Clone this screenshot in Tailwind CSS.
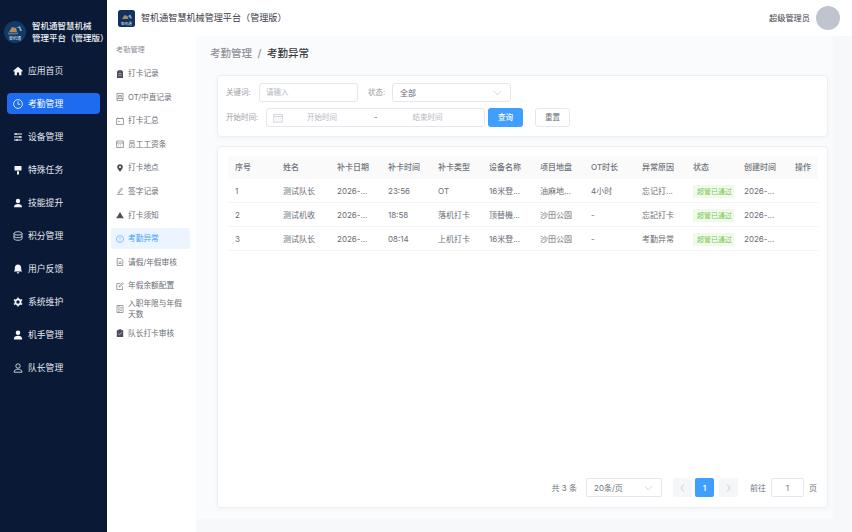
<!doctype html>
<html lang="zh">
<head>
<meta charset="utf-8">
<script src="https://cdn.jsdelivr.net/npm/@tailwindcss/browser@4"></script>
</head>
<body class="m-0">
<div class="flex h-[532px] w-[852px] overflow-hidden bg-[#f6f8f9] font-['Inter','Noto_Sans_CJK_SC',sans-serif] text-[#6a6d75]">
  <!-- primary sidebar -->
  <aside class="flex h-full w-[107px] shrink-0 flex-col bg-[#0a1935] text-[#e4e8ef]">
    <div class="flex h-[55px] items-center gap-[6px] pl-[4px] pt-[8px]">
      <svg class="h-[22px] w-[22px] shrink-0" viewBox="0 0 22 22"><circle cx="11" cy="11" r="11" fill="#123a66"/><path d="M5 11l3-5 4 1 1 4z" fill="#b98a55"/><path d="M12 7l4-2 2 5h-2l-1-3z" fill="#7fa6cc"/><rect x="4" y="11.500" width="10" height="2" fill="#5a6f8c"/><text x="11" y="18.500" text-anchor="middle" font-size="4" fill="#dfe6ef" font-family="Noto Sans CJK SC">智机通</text></svg>
      <div class="text-[8.500px] font-medium leading-[12px] text-[#eef1f5] whitespace-nowrap">智机通智慧机械<br>管理平台（管理版）</div>
    </div>
    <nav class="mt-[5px] flex flex-col gap-[12px] px-[7px] text-[8.800px] leading-[21px]">
      <a class="flex h-[21px] items-center gap-[5px] pl-[6px]"><svg class="h-[10px] w-[10px]" viewBox="0 0 10 10" fill="#f4f6f9"><path d="M5 .8L.5 4.600v.8h1.100V9.300h2.300V6.500h2.200v2.800h2.300V5.400h1.100v-.8z"/></svg>应用首页</a>
      <a class="flex h-[21px] items-center gap-[5px] rounded-[4px] bg-[#1d6cf0] pl-[6px] text-white"><svg class="h-[10px] w-[10px]" viewBox="0 0 10 10" fill="none" stroke="#fff" stroke-width=".8"><circle cx="5" cy="5" r="4.400"/><path d="M5 2.400V5.300h2.200"/></svg>考勤管理</a>
      <a class="flex h-[21px] items-center gap-[5px] pl-[6px]"><svg class="h-[10px] w-[10px]" viewBox="0 0 10 10" fill="none" stroke="#eef1f5" stroke-width="1"><path d="M1 2h8M1 5h8M1 8h8"/><path d="M3 1v2M7 4v2M4 7v2" stroke-width="1.200"/></svg>设备管理</a>
      <a class="flex h-[21px] items-center gap-[5px] pl-[6px]"><svg class="h-[10px] w-[10px]" viewBox="0 0 10 10" fill="#f4f6f9"><path d="M1.500 1h7v4.600h-7zM4 6.200h2V9.400H4z"/></svg>特殊任务</a>
      <a class="flex h-[21px] items-center gap-[5px] pl-[6px]"><svg class="h-[10px] w-[10px]" viewBox="0 0 10 10" fill="#f4f6f9"><circle cx="5" cy="3" r="2.200"/><path d="M1 9.200c0-2.400 1.600-3.300 4-3.300s4 .9 4 3.300z"/></svg>技能提升</a>
      <a class="flex h-[21px] items-center gap-[5px] pl-[6px]"><svg class="h-[10px] w-[10px]" viewBox="0 0 10 10" fill="none" stroke="#eef1f5" stroke-width=".8"><ellipse cx="5" cy="2.400" rx="4" ry="1.700"/><path d="M1 2.400v5.200c0 1 1.800 1.700 4 1.700s4-.7 4-1.700V2.400M1 5c0 1 1.800 1.700 4 1.700S9 6 9 5"/></svg>积分管理</a>
      <a class="flex h-[21px] items-center gap-[5px] pl-[6px]"><svg class="h-[10px] w-[10px]" viewBox="0 0 10 10" fill="#f4f6f9"><path d="M5 .6c-2 0-3.200 1.500-3.200 3.400v2L.9 7.600h8.200L8.200 6V4C8.200 2.100 7 .6 5 .6zM3.800 8.200a1.200 1.200 0 0 0 2.400 0z"/></svg>用户反馈</a>
      <a class="flex h-[21px] items-center gap-[5px] pl-[6px]"><svg class="h-[10px] w-[10px]" viewBox="0 0 10 10" fill="none" stroke="#f4f6f9"><circle cx="5" cy="5" r="2.600" stroke-width="1.800"/><path d="M5 .5v1.500M5 8v1.500M.9 2.600l1.300.8M7.800 6.600l1.300.8M.9 7.400l1.300-.8M7.800 3.400l1.300-.8" stroke-width="1.400"/></svg>系统维护</a>
      <a class="flex h-[21px] items-center gap-[5px] pl-[6px]"><svg class="h-[10px] w-[10px]" viewBox="0 0 10 10" fill="#f4f6f9"><circle cx="5" cy="2.800" r="2.300"/><path d="M.8 9.400c0-2.600 1.800-3.600 4.200-3.600s4.200 1 4.200 3.600z"/></svg>机手管理</a>
      <a class="flex h-[21px] items-center gap-[5px] pl-[6px]"><svg class="h-[10px] w-[10px]" viewBox="0 0 10 10" fill="none" stroke="#eef1f5" stroke-width=".8"><circle cx="5" cy="3" r="2.200"/><path d="M1 9.200c0-2 1.800-3 4-3s4 1 4 3z"/></svg>队长管理</a>
    </nav>
  </aside>

  <div class="flex min-w-0 flex-1 flex-col">
    <!-- header -->
    <header class="flex h-[36px] shrink-0 items-center justify-between bg-white px-[11px]">
      <div class="flex items-center gap-[6px]">
        <svg class="h-[17px] w-[17px]" viewBox="0 0 17 17"><rect width="17" height="17" rx="2.500" fill="#12315c"/><path d="M4 9l2.500-4 3 1 1 3z" fill="#a98a66"/><path d="M10 6l2.500-1.500 1.500 4h-1.500z" fill="#7fa6cc"/><text x="8.500" y="14.500" text-anchor="middle" font-size="3.600" fill="#dfe6ef" font-family="Noto Sans CJK SC">智机通</text></svg>
        <span class="text-[9.100px] text-[#3c4048]">智机通智慧机械管理平台（管理版）</span>
      </div>
      <div class="flex items-center gap-[6px] pr-[1px]">
        <span class="text-[8.200px] text-[#3c4048]">超级管理员</span>
        <div class="h-[24px] w-[24px] rounded-full bg-[#c0c4cf]"></div>
      </div>
    </header>

    <div class="flex min-h-0 flex-1">
      <!-- secondary sidebar -->
      <aside class="w-[89px] shrink-0 bg-white pl-[4px] pr-[6px] pt-[8px]">
        <div class="h-[12px] pl-[5px] text-[7.200px] leading-[12px] text-[#8a8f99]">考勤管理</div>
        <div class="mt-[7px] flex flex-col gap-[2.600px] text-[7.700px] leading-[11px]">
          <a class="flex h-[21px] items-center gap-[4px] pl-[5px]"><svg class="h-[8px] w-[8px] shrink-0" viewBox="0 0 8 8" fill="#4b4f57"><path d="M1 1.200h6V8H1zM2 .2h4v1H2z"/><path d="M2.500 3.200h3v.6h-3zM2.500 5h3v.6h-3z" fill="#fff"/></svg>打卡记录</a>
          <a class="flex h-[21px] items-center gap-[4px] pl-[5px]"><svg class="h-[8px] w-[8px] shrink-0" viewBox="0 0 8 8" fill="none" stroke="#606266" stroke-width=".6"><path d="M1 .5h6v7H1zM2.500 2.500h3v1.500h-3zM1 5.500h6"/></svg>OT/中直记录</a>
          <a class="flex h-[21px] items-center gap-[4px] pl-[5px]"><svg class="h-[8px] w-[8px] shrink-0" viewBox="0 0 8 8" fill="none" stroke="#606266" stroke-width=".6"><path d="M.6 1.500h6.800v6H.6zM2 .4v1.600M6 .4v1.600M2 4.500h1.500"/></svg>打卡汇总</a>
          <a class="flex h-[21px] items-center gap-[4px] pl-[5px]"><svg class="h-[8px] w-[8px] shrink-0" viewBox="0 0 8 8" fill="none" stroke="#606266" stroke-width=".6"><path d="M.6 1h6.800v6.500H.6zM.6 3h6.800M2.500 4.500h.6M4.500 4.500h.6M2.500 6h.6M4.500 6h.6"/></svg>员工工资条</a>
          <a class="flex h-[21px] items-center gap-[4px] pl-[5px]"><svg class="h-[8px] w-[8px] shrink-0" viewBox="0 0 8 8" fill="#4b4f57"><path d="M4 .3a2.800 2.800 0 0 0-2.800 2.800C1.200 5 4 7.800 4 7.800S6.800 5 6.800 3.100A2.800 2.800 0 0 0 4 .3z"/><circle cx="4" cy="3" r="1" fill="#fff"/></svg>打卡地点</a>
          <a class="flex h-[21px] items-center gap-[4px] pl-[5px]"><svg class="h-[8px] w-[8px] shrink-0" viewBox="0 0 8 8" fill="none" stroke="#606266" stroke-width=".6"><path d="M2 5.500L5.500 1l1 .8L3 6.200zM.8 7.400h6.400"/></svg>签字记录</a>
          <a class="flex h-[21px] items-center gap-[4px] pl-[5px]"><svg class="h-[8px] w-[8px] shrink-0" viewBox="0 0 8 8" fill="#4b4f57"><path d="M4 1l3.800 6.200H.2z"/></svg>打卡须知</a>
          <a class="flex h-[21px] items-center gap-[4px] rounded-[2px] bg-[#ecf5ff] pl-[5px] text-[#409eff]"><svg class="h-[8px] w-[8px] shrink-0" viewBox="0 0 8 8" fill="none" stroke="#409eff" stroke-width=".6"><circle cx="4" cy="4" r="3.500"/><path d="M4 2v2.500M4 5.300v.7"/></svg>考勤异常</a>
          <a class="flex h-[21px] items-center gap-[4px] pl-[5px]"><svg class="h-[8px] w-[8px] shrink-0" viewBox="0 0 8 8" fill="none" stroke="#606266" stroke-width=".6"><path d="M1.200.5h3.800l1.800 1.800v5.200H1.200zM2.500 4h3M2.500 5.500h3"/></svg>请假/年假审核</a>
          <a class="flex h-[21px] items-center gap-[4px] pl-[5px]"><svg class="h-[8px] w-[8px] shrink-0" viewBox="0 0 8 8" fill="none" stroke="#606266" stroke-width=".6"><path d="M6.500 4.500v3H.8V1.500h3.500M3 5l.3-1.200L6.500.8l.8.8L4.200 4.700z"/></svg>年假余额配置</a>
          <a class="flex h-[21px] items-center gap-[4px] pl-[5px] pr-[4px]"><svg class="h-[8px] w-[8px] shrink-0" viewBox="0 0 8 8" fill="none" stroke="#606266" stroke-width=".6"><path d="M1 .5h6v7H1zM3 .5v7M4.300 2.500h1.500M4.300 4h1.500M4.300 5.500h1.500"/></svg><span>入职年限与年假天数</span></a>
          <a class="flex h-[21px] items-center gap-[4px] pl-[5px]"><svg class="h-[8px] w-[8px] shrink-0" viewBox="0 0 8 8" fill="#4b4f57"><path d="M.8 1.200h6.400V8H.8zM2.600.2h2.800v1.600H2.600z"/><path d="M2.300 4.500l1.200 1.200 2.200-2.200" stroke="#fff" stroke-width=".6" fill="none"/></svg>队长打卡审核</a>
        </div>
      </aside>

      <!-- main -->
      <div class="flex min-w-0 flex-1 items-start">
        <main class="flex h-[483px] w-[637px] flex-col bg-[#fafbfc] pl-[21px] pr-[5px]">
          <div class="-ml-[7px] flex h-[39px] shrink-0 items-center pb-[4px] text-[10.500px] font-medium">
            <span class="text-[#909399]">考勤管理</span><span class="mx-[5.500px] text-[#909399]">/</span><span class="text-[#3a3d44]">考勤异常</span>
          </div>

          <section class="flex h-[62px] w-[611px] shrink-0 flex-col gap-[6px] rounded-[4px] border border-[#eceff3] bg-white pl-[8px] pt-[7px] text-[7.500px] shadow-[0_1px_4px_rgba(0,0,0,0.04)]">
            <div class="flex h-[19px] items-center">
              <span class="w-[33px] text-[#9a9ea6]">关键词:</span>
              <div class="flex h-[19px] w-[99px] items-center rounded-[3px] border border-[#e4e7ed] pl-[6px] text-[#b5b8bf]">请输入</div>
              <span class="ml-[10px] w-[24px] text-[#9a9ea6]">状态:</span>
              <div class="flex h-[19px] w-[119px] items-center justify-between rounded-[3px] border border-[#e4e7ed] pl-[7px] pr-[8px] text-[8px]">全部
                <svg class="h-[6px] w-[9px]" viewBox="0 0 9 6" fill="none" stroke="#b5b8bf" stroke-width=".6"><path d="M.7 1l3.800 3.800L8.300 1"/></svg>
              </div>
            </div>
            <div class="flex h-[19px] items-center">
              <span class="w-[40px] whitespace-nowrap text-[#9a9ea6]">开始时间:</span>
              <div class="flex h-[19px] w-[219px] items-center rounded-[3px] border border-[#e4e7ed] pl-[6px] text-[#b5b8bf]">
                <svg class="h-[10px] w-[10px] shrink-0" viewBox="0 0 10 10" fill="none" stroke="#b5b8bf" stroke-width=".6"><path d="M.7 1.400h8.600v7.800H.7zM.7 3.400h8.600M2.500 5h.8M4.600 5h.8M6.700 5h.8M2.500 7h.8M4.600 7h.8M6.700 7h.8"/></svg>
                <span class="ml-[24px] w-[34px] whitespace-nowrap">开始时间</span>
                <span class="ml-[33px] text-[#606266]">-</span>
                <span class="ml-[35px] whitespace-nowrap">结束时间</span>
              </div>
              <div class="ml-[3px] flex h-[19px] w-[35px] items-center justify-center rounded-[3px] bg-[#409eff] font-medium text-white">查询</div>
              <div class="ml-[12px] flex h-[19px] w-[35px] items-center justify-center rounded-[3px] border border-[#e4e7ed]">重置</div>
            </div>
          </section>

          <section class="mt-[9px] flex h-[362px] w-[611px] shrink-0 flex-col rounded-[4px] border border-[#eceff3] bg-white pl-[10px] pr-[9px] pt-[9px] text-[8px] shadow-[0_1px_4px_rgba(0,0,0,0.04)]">
            <div class="grid h-[23px] grid-cols-[48px_54px_51px_50px_51px_51px_51px_51px_51px_51px_51px_30px] items-center bg-[#fafafa] pb-[2px] pl-[7px] font-medium text-[#70747c]">
              <span>序号</span><span>姓名</span><span>补卡日期</span><span>补卡时间</span><span>补卡类型</span><span>设备名称</span><span>项目地盘</span><span>OT时长</span><span>异常原因</span><span>状态</span><span>创建时间</span><span>操作</span>
            </div>
            <div class="grid h-[24px] grid-cols-[48px_54px_51px_50px_51px_51px_51px_51px_51px_51px_51px_30px] items-center border-b border-[#f4f5f7] pl-[7px]">
              <span>1</span><span>测试队长</span><span>2026-...</span><span>23:56</span><span>OT</span><span>16米登...</span><span>油麻地...</span><span>4小时</span><span>忘记打...</span><span class="mt-[2px] w-[41px] whitespace-nowrap rounded-[2px] border border-[#eef8e6] bg-[#f2faee] py-[1px] pl-[2px] text-center text-[7px] leading-[9px] text-[#78c950]">超管已通过</span><span>2026-...</span><span></span>
            </div>
            <div class="grid h-[24px] grid-cols-[48px_54px_51px_50px_51px_51px_51px_51px_51px_51px_51px_30px] items-center border-b border-[#f4f5f7] pl-[7px]">
              <span>2</span><span>测试机收</span><span>2026-...</span><span>18:58</span><span>落机打卡</span><span>顶替機...</span><span>沙田公園</span><span>-</span><span>忘記打卡</span><span class="mt-[2px] w-[41px] whitespace-nowrap rounded-[2px] border border-[#eef8e6] bg-[#f2faee] py-[1px] pl-[2px] text-center text-[7px] leading-[9px] text-[#78c950]">超管已通过</span><span>2026-...</span><span></span>
            </div>
            <div class="grid h-[24px] grid-cols-[48px_54px_51px_50px_51px_51px_51px_51px_51px_51px_51px_30px] items-center border-b border-[#f4f5f7] pl-[7px]">
              <span>3</span><span>测试队长</span><span>2026-...</span><span>08:14</span><span>上机打卡</span><span>16米登...</span><span>沙田公園</span><span>-</span><span>考勤异常</span><span class="mt-[2px] w-[41px] whitespace-nowrap rounded-[2px] border border-[#eef8e6] bg-[#f2faee] py-[1px] pl-[2px] text-center text-[7px] leading-[9px] text-[#78c950]">超管已通过</span><span>2026-...</span><span></span>
            </div>
            <div class="mt-auto mb-[10px] flex h-[19px] items-center justify-end text-[#70747c]">
              <span>共 3 条</span>
              <div class="ml-[9px] flex h-[19px] w-[76px] items-center justify-between rounded-[2px] border border-[#e4e7ed] pl-[7px] pr-[8px]">20条/页<svg class="h-[6px] w-[9px]" viewBox="0 0 9 6" fill="none" stroke="#b5b8bf" stroke-width=".6"><path d="M.7 1l3.800 3.800L8.300 1"/></svg></div>
              <div class="ml-[11px] flex h-[19px] w-[19px] items-center justify-center rounded-[2px] bg-[#f5f6f8]"><svg class="h-[8px] w-[5px]" viewBox="0 0 5 8" fill="none" stroke="#b5b8bf" stroke-width=".7"><path d="M4 .6L1 4l3 3.400"/></svg></div>
              <div class="ml-[3px] flex h-[19px] w-[19px] items-center justify-center rounded-[2px] bg-[#409eff] font-semibold text-white">1</div>
              <div class="ml-[5px] flex h-[19px] w-[19px] items-center justify-center rounded-[2px] bg-[#f5f6f8]"><svg class="h-[8px] w-[5px]" viewBox="0 0 5 8" fill="none" stroke="#b5b8bf" stroke-width=".7"><path d="M1 .6L4 4 1 7.400"/></svg></div>
              <span class="ml-[12px]">前往</span>
              <div class="ml-[5px] flex h-[19px] w-[33px] items-center justify-center rounded-[2px] border border-[#e4e7ed]">1</div>
              <span class="ml-[5px] mr-[1px]">页</span>
            </div>
          </section>
        </main>
      </div>
    </div>
  </div>
</div>
</body>
</html>
